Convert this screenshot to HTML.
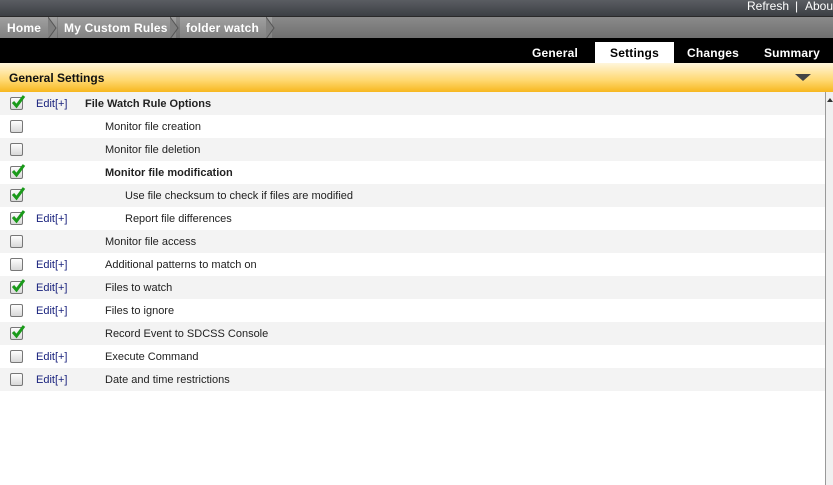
<!DOCTYPE html>
<html><head><style>
body{margin:0;width:833px;height:485px;overflow:hidden;background:#fff;font-family:"Liberation Sans",Arial,sans-serif;position:relative}
.top{position:absolute;left:0;top:0;width:833px;height:16px;background:linear-gradient(#5a5d62,#3c3f44);color:#fff;font-size:12px}
.top span{position:absolute;top:0;line-height:13px}
.bc{position:absolute;left:0;top:16px;width:833px;height:22px;background:linear-gradient(#8a8a8a,#6e6e6e);border-top:1px solid #2a2a2a}
.crumb{position:absolute;top:0;height:22px;line-height:22px;color:#fff;font-weight:bold;font-size:12px;background:linear-gradient(#a0a0a0,#808080);letter-spacing:0.2px}
.sep{position:absolute;top:0;width:10px;height:22px}
.blk{position:absolute;left:0;top:38px;width:833px;height:25px;background:#000}
.tab{position:absolute;top:4px;height:21px;line-height:22px;color:#fff;font-weight:bold;font-size:12px;text-align:center;letter-spacing:0.2px}
.tab.act{background:#fff;color:#000}
.hdr{position:absolute;left:0;top:63px;width:833px;height:29px;background:linear-gradient(#fff6dc,#ffd870 60%,#f7b71e);}
.hdr b{position:absolute;left:9px;top:8px;font-size:12px;color:#111}
.tri{position:absolute;left:795px;top:74px;width:0;height:0;border-left:8px solid transparent;border-right:8px solid transparent;border-top:7px solid #444}
.row{position:absolute;left:0;width:826px;height:23px;font-size:11px;color:#222}
.row.o{background:#f3f3f3}
.cb{position:absolute;left:10px;top:5px;width:11px;height:11px;border:1px solid #777;border-radius:2px;background:linear-gradient(#fdfdfd,#d8d8d8)}
.cb svg{position:absolute;left:-1px;top:-4px}
.ed{position:absolute;left:36px;top:6px;color:#1a237e}
.lb{position:absolute;top:6px}
.sb{position:absolute;left:825px;top:92px;width:8px;height:393px;border-left:1px solid #999;background:#f0f0f0}
</style></head><body>
<div class="top"><span style="left:747px">Refresh</span><span style="left:795px">|</span><span style="left:805px">About</span></div>
<div class="bc">
<div class="crumb" style="left:0;width:50px;padding-left:7px">Home</div>
<svg class="sep" style="left:48px" viewBox="0 0 10 22"><path d="M0 0L8 11L0 22" fill="#808080" stroke="#555"/></svg>
<div class="crumb" style="left:58px;width:112px;padding-left:6px">My Custom Rules</div>
<svg class="sep" style="left:170px" viewBox="0 0 10 22"><path d="M0 0L8 11L0 22" fill="#808080" stroke="#555"/></svg>
<div class="crumb" style="left:180px;width:86px;padding-left:6px">folder watch</div>
<svg class="sep" style="left:266px" viewBox="0 0 10 22"><path d="M0 0L8 11L0 22" fill="#808080" stroke="#555"/></svg>
</div>
<div class="blk">
<div class="tab" style="left:525px;width:60px">General</div>
<div class="tab act" style="left:595px;width:79px">Settings</div>
<div class="tab" style="left:680px;width:66px">Changes</div>
<div class="tab" style="left:758px;width:68px">Summary</div>
</div>
<div class="hdr"><b>General Settings</b></div>
<div class="tri"></div>
<div id="rows"></div>
<div class="sb"><svg width="8" height="10" style="position:absolute;left:0;top:4px"><path d="M1 6L4 2L7 6Z" fill="#333"/></svg></div>
<script>
var C='<svg width="16" height="16" viewBox="0 0 16 16"><path d="M3 8L6.5 12L14 2" fill="none" stroke="#1a9a1a" stroke-width="3"/></svg>';
var d=[[1,1,'File Watch Rule Options',85,1],[0,0,'Monitor file creation',105],[0,0,'Monitor file deletion',105],[1,0,'Monitor file modification',105,1],[1,0,'Use file checksum to check if files are modified',125],[1,1,'Report file differences',125],[0,0,'Monitor file access',105],[0,1,'Additional patterns to match on',105],[1,1,'Files to watch',105],[0,1,'Files to ignore',105],[1,0,'Record Event to SDCSS Console',105],[0,1,'Execute Command',105],[0,1,'Date and time restrictions',105]];
var h='';d.forEach(function(r,i){h+='<div class="row'+(i%2==0?' o':'')+'" style="top:'+(92+i*23)+'px"><div class="cb">'+(r[0]?C:'')+'</div>'+(r[1]?'<span class="ed">Edit[+]</span>':'')+'<span class="lb" style="left:'+r[3]+'px;'+(r[4]?'font-weight:bold;':'')+'">'+r[2]+'</span></div>';});
document.getElementById('rows').innerHTML=h;
</script>
</body></html>
